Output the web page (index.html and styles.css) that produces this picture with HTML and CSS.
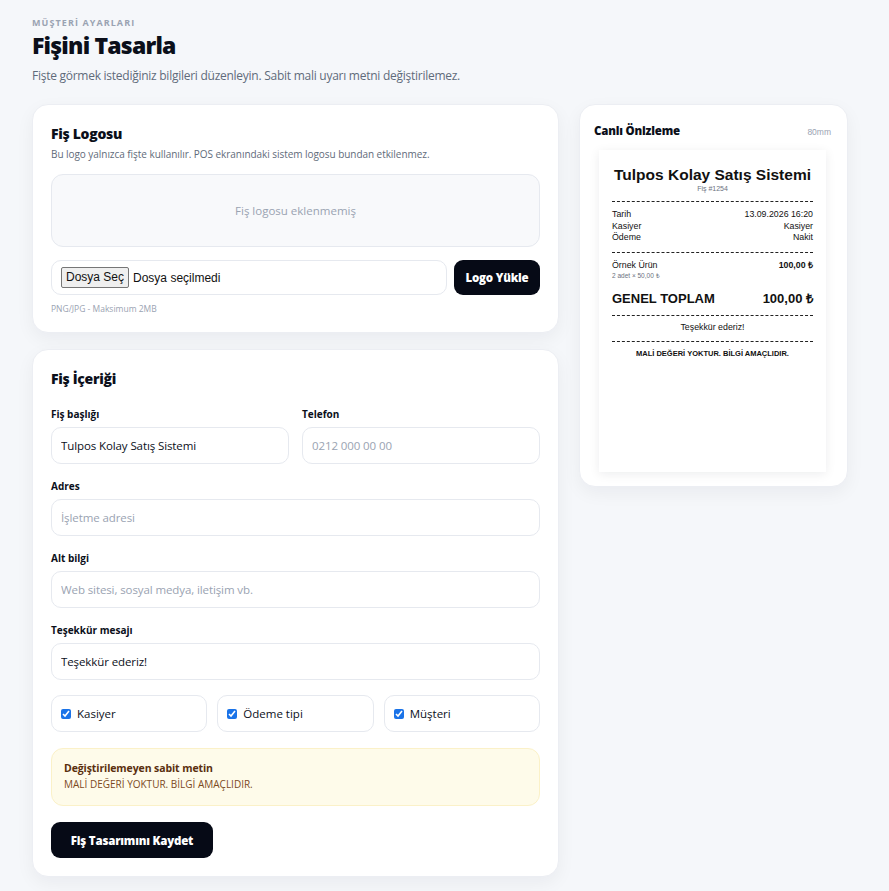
FILE: index.html
```html
<!DOCTYPE html>
<html lang="tr">
<head>
<meta charset="utf-8">
<title>Fişini Tasarla</title>
<link rel="stylesheet" href="styles.css">
</head>
<body>
<div class="page">
  <div class="eyebrow">MÜŞTERİ AYARLARI</div>
  <h1 class="title">Fişini Tasarla</h1>
  <p class="sub">Fişte görmek istediğiniz bilgileri düzenleyin. Sabit mali uyarı metni değiştirilemez.</p>

  <div class="layout">
    <div class="col">
      <section class="card">
        <h2 class="card-title">Fiş Logosu</h2>
        <p class="card-desc">Bu logo yalnızca fişte kullanılır. POS ekranındaki sistem logosu bundan etkilenmez.</p>
        <div class="logo-box">Fiş logosu eklenmemiş</div>
        <div class="upload-row">
          <label class="file-field">
            <input type="file" class="file-hidden">
            <span class="file-btn">Dosya Seç</span>
            <span class="file-name">Dosya seçilmedi</span>
          </label>
          <button class="btn-dark btn-upload">Logo Yükle</button>
        </div>
        <div class="hint">PNG/JPG - Maksimum 2MB</div>
      </section>

      <section class="card card-content">
        <h2 class="card-title">Fiş İçeriği</h2>
        <div class="grid2">
          <div class="field">
            <label class="label">Fiş başlığı</label>
            <input class="input" type="text" value="Tulpos Kolay Satış Sistemi">
          </div>
          <div class="field">
            <label class="label">Telefon</label>
            <input class="input" type="text" placeholder="0212 000 00 00">
          </div>
        </div>
        <div class="field">
          <label class="label">Adres</label>
          <input class="input" type="text" placeholder="İşletme adresi">
        </div>
        <div class="field">
          <label class="label">Alt bilgi</label>
          <input class="input" type="text" placeholder="Web sitesi, sosyal medya, iletişim vb.">
        </div>
        <div class="field">
          <label class="label">Teşekkür mesajı</label>
          <input class="input" type="text" value="Teşekkür ederiz!">
        </div>
        <div class="checks">
          <label class="check"><input type="checkbox" checked><span>Kasiyer</span></label>
          <label class="check"><input type="checkbox" checked><span>Ödeme tipi</span></label>
          <label class="check"><input type="checkbox" checked><span>Müşteri</span></label>
        </div>
        <div class="notice">
          <div class="notice-title">Değiştirilemeyen sabit metin</div>
          <div class="notice-text">MALİ DEĞERİ YOKTUR. BİLGİ AMAÇLIDIR.</div>
        </div>
        <div><button class="btn-dark btn-save">Fiş Tasarımını Kaydet</button></div>
      </section>
    </div>

    <aside class="card preview">
      <div class="preview-head">
        <span class="preview-title">Canlı Önizleme</span>
        <span class="preview-size">80mm</span>
      </div>
      <div class="paper">
        <div class="r-title">Tulpos Kolay Satış Sistemi</div>
        <div class="r-no">Fiş #1254</div>
        <div class="r-sep"></div>
        <div class="r-row"><span>Tarih</span><span>13.09.2026 16:20</span></div>
        <div class="r-row"><span>Kasiyer</span><span>Kasiyer</span></div>
        <div class="r-row"><span>Ödeme</span><span>Nakit</span></div>
        <div class="r-sep"></div>
        <div class="r-row"><span>Örnek Ürün</span><span class="b">100,00 ₺</span></div>
        <div class="r-qty">2 adet × 50,00 ₺</div>
        <div class="r-total"><span>GENEL TOPLAM</span><span>100,00 ₺</span></div>
        <div class="r-sep"></div>
        <div class="r-thanks">Teşekkür ederiz!</div>
        <div class="r-sep"></div>
        <div class="r-legal">MALİ DEĞERİ YOKTUR. BİLGİ AMAÇLIDIR.</div>
      </div>
    </aside>
  </div>
</div>
</body>
</html>
```

FILE: styles.css
```css
* { box-sizing: border-box; }
html, body { margin: 0; padding: 0; }
body {
  background: #f5f7fa;
  font-family: "Open Sans", "Noto Sans", sans-serif;
  color: #0b0f1a;
}
.page { padding: 16px 32px 14px 32px; }
.eyebrow {
  font-size: 9px;
  font-weight: 700;
  letter-spacing: 0.12em;
  color: #9aa3b2;
  line-height: 14px;
}
.title {
  margin: -1px 0 0;
  font-size: 23px;
  font-weight: 800;
  line-height: 32px;
  letter-spacing: -0.8px;
}
.sub {
  margin: 6px 0 0;
  font-size: 12px;
  letter-spacing: -0.26px;
  color: #5f6b7a;
  line-height: 18px;
}
.layout {
  display: grid;
  grid-template-columns: 527px 269px;
  gap: 20px;
  margin-top: 19px;
  align-items: start;
}
.col { display: flex; flex-direction: column; gap: 16px; }
.card {
  background: #fff;
  border: 1px solid #eceef3;
  border-radius: 16px;
  box-shadow: 0 6px 18px rgba(15, 23, 42, 0.05);
  padding: 19px 18px 17px;
}
.card-title {
  margin: 0;
  font-size: 14px;
  font-weight: 800;
  line-height: 20px;
  letter-spacing: -0.3px;
}
.card-desc {
  margin: 3px 0 0;
  font-size: 10px;
  letter-spacing: -0.05px;
  color: #5f6b7a;
  line-height: 14px;
}
.logo-box {
  margin-top: 13px;
  height: 73px;
  border: 1px solid #e6e9ef;
  border-radius: 12px;
  background: #f8f9fb;
  display: flex;
  align-items: center;
  justify-content: center;
  font-size: 11.5px;
  color: #9aa3b2;
}
.upload-row {
  margin-top: 13px;
  display: flex;
  gap: 7px;
}
.file-field {
  flex: 1;
  height: 35px;
  border: 1px solid #e6e9ef;
  border-radius: 10px;
  display: flex;
  align-items: center;
  padding-left: 9px;
  gap: 4px;
  font-family: "Liberation Sans", Arial, sans-serif;
  font-size: 12px;
  color: #111;
  cursor: pointer;
}
.file-hidden { display: none; }
.file-btn {
  background: #efefef;
  border: 1px solid #767676;
  border-radius: 2px;
  padding: 1px 4px;
  line-height: 17px;
}
.btn-dark {
  background: #060a16;
  color: #fff;
  border: 0;
  border-radius: 9px;
  font-family: "Open Sans", sans-serif;
  font-weight: 800;
  font-size: 11.5px;
  letter-spacing: -0.2px;
  cursor: pointer;
}
.btn-upload { width: 86px; height: 35px; }
.hint {
  margin-top: 8px;
  font-size: 8.5px;
  color: #9aa3b2;
  line-height: 12px;
}
.card-content { padding-top: 19px; padding-bottom: 18px; }
.card-content .card-title { margin-bottom: 18px; }
.grid2 {
  display: grid;
  grid-template-columns: 1fr 1fr;
  gap: 13px;
}
.field { display: flex; flex-direction: column; margin-bottom: 15px; }
.label {
  font-size: 10px;
  font-weight: 700;
  line-height: 14px;
  margin-bottom: 6px;
}
.input {
  height: 37px;
  border: 1px solid #e6e9ef;
  border-radius: 10px;
  padding: 0 9px;
  font-family: "Open Sans", sans-serif;
  font-size: 11.5px;
  letter-spacing: -0.1px;
  color: #0b0f1a;
  background: #fff;
  outline: none;
}
.input::placeholder { color: #9aa3b2; }
.checks {
  display: grid;
  grid-template-columns: 1fr 1fr 1fr;
  gap: 10px;
  margin-top: 1px;
}
.check {
  height: 37px;
  border: 1px solid #e6e9ef;
  border-radius: 10px;
  display: flex;
  align-items: center;
  gap: 6px;
  padding-left: 9px;
  font-size: 11.5px;
}
.check input {
  width: 10px;
  height: 10px;
  margin: 0;
  accent-color: #1a73e8;
}
.notice {
  margin-top: 16px;
  background: #fefbea;
  border: 1px solid #fbf1c8;
  border-radius: 12px;
  padding: 11px 12px 12px;
}
.notice-title {
  font-size: 10.5px;
  font-weight: 700;
  color: #5a2f0e;
  line-height: 16px;
  letter-spacing: -0.1px;
}
.notice-text {
  font-size: 10px;
  color: #7c4a1e;
  line-height: 17px;
}
.btn-save {
  margin-top: 16px;
  width: 162px;
  height: 36px;
  font-size: 11.5px;
}
.preview { padding: 18px 16px 14px 14px; }
.preview-head {
  display: flex;
  justify-content: space-between;
  align-items: baseline;
  margin-bottom: 12px;
}
.preview-title { font-size: 11.5px; font-weight: 800; letter-spacing: -0.2px; }
.preview-size {
  font-family: "Liberation Sans", Arial, sans-serif;
  font-size: 8.5px;
  color: #9aa3b2;
}
.paper {
  margin: 0 5px 0 5px;
  height: 322px;
  background: #fff;
  box-shadow: 0 2px 10px rgba(15, 23, 42, 0.08);
  padding: 16px 13px;
  font-family: "Liberation Sans", Arial, sans-serif;
  color: #111;
}
.r-title {
  text-align: center;
  font-size: 15.5px;
  font-weight: 700;
  line-height: 18px;
}
.r-no {
  text-align: center;
  font-size: 7px;
  color: #6b7280;
  line-height: 9px;
}
.r-sep {
  border-top: 1px dashed #222;
  margin: 8px 0 7px;
}
.r-row {
  display: flex;
  justify-content: space-between;
  font-size: 8.8px;
  line-height: 11.5px;
}
.b { font-weight: 700; }
.r-qty {
  font-size: 6.5px;
  color: #6b7280;
  line-height: 10px;
}
.r-total {
  display: flex;
  justify-content: space-between;
  font-size: 13px;
  font-weight: 700;
  line-height: 16px;
  margin-top: 10px;
  margin-bottom: 1px;
}
.r-thanks {
  text-align: center;
  font-size: 8.8px;
  line-height: 12px;
  margin: -2px 0 1px;
}
.r-legal {
  text-align: center;
  font-size: 7.5px;
  font-weight: 700;
  line-height: 10px;
}
```
